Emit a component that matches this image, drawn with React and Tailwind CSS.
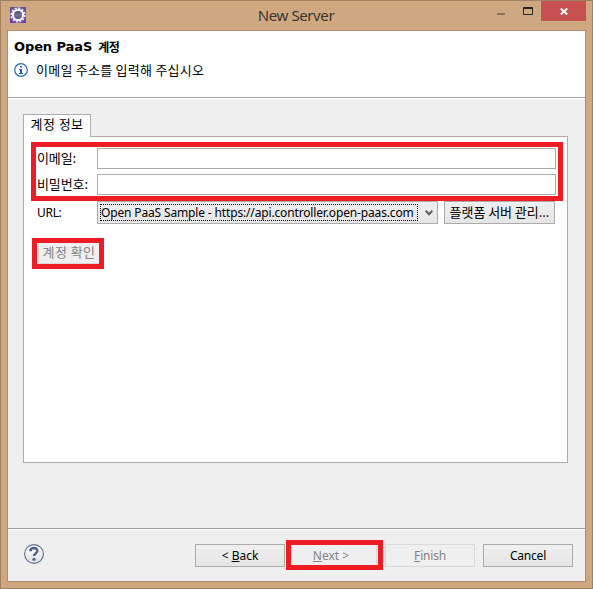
import React from "react";

const ui = "font-['Noto_Sans','Noto_Sans_CJK_KR',sans-serif]";
const ko = "font-['Noto_Sans_CJK_KR',sans-serif] text-[13px]";

function AppIcon() {
  return (
    <svg width="16" height="16" viewBox="0 0 16 16" className="block">
      <defs>
        <linearGradient id="tile" x1="0" y1="0" x2="0" y2="1">
          <stop offset="0" stopColor="#66568c" />
          <stop offset="1" stopColor="#6140ae" />
        </linearGradient>
        <linearGradient id="core" x1="0" y1="0" x2="0" y2="1">
          <stop offset="0" stopColor="#3d3a55" />
          <stop offset="0.5" stopColor="#7a729c" />
          <stop offset="1" stopColor="#4a4068" />
        </linearGradient>
      </defs>
      <rect width="16" height="16" fill="url(#tile)" />
      <circle cx="8" cy="8" r="6.8" fill="none" stroke="#e6e2ec" strokeWidth="1.8" strokeDasharray="2.1 1.46" />
      <circle cx="8" cy="8" r="5.1" fill="url(#core)" stroke="#f4f2f4" strokeWidth="2.2" />
    </svg>
  );
}

function InfoIcon() {
  return (
    <svg width="14" height="14" viewBox="0 0 14 14" className="mt-px block">
      <circle cx="7" cy="7" r="6.3" fill="#fdfeff" stroke="#286aaf" strokeWidth="1.2" />
      <path d="M6 3h2v1.6H6zM5 6h3v4h1v1H5v-1h1V7H5z" fill="#1f64a8" />
    </svg>
  );
}

function HelpIcon() {
  return (
    <svg width="20" height="20" viewBox="0 0 20 20" className="block">
      <defs>
        <linearGradient id="help" x1="0" y1="0" x2="0" y2="1">
          <stop offset="0" stopColor="#ffffff" />
          <stop offset="1" stopColor="#dedede" />
        </linearGradient>
      </defs>
      <circle cx="10" cy="10" r="9.4" fill="url(#help)" stroke="#607190" strokeWidth="1.1" />
      <path d="M6.4 7.2C6.4 3 13.4 3 13.4 6.8c0 2.6-3.4 2.6-3.4 5.2" fill="none" stroke="#4d618a" strokeWidth="2.5" />
      <circle cx="10" cy="15.3" r="1.6" fill="#4d618a" />
    </svg>
  );
}

function Button({ className, disabled, children }) {
  return (
    <button
      className={`flex items-center justify-center leading-[16px] whitespace-nowrap ${
        disabled ? "border-[#d9d9d9] bg-[#efefef] text-[#838383]" : "border-[#acacac] bg-linear-to-b from-[#f0f0f0] to-[#e5e5e5] text-black"
      } ${className}`}
    >
      {children}
    </button>
  );
}

function Field({ label }) {
  return (
    <label className="flex h-[21px] items-center">
      <span className={`-mt-[2px] w-[61px] pl-px leading-[16px] tracking-[-0.1px] ${ko}`}>{label}</span>
      <input className="h-[21px] w-[459px] border border-[#abadb3] bg-white" />
    </label>
  );
}

export default function App() {
  return (
    <div className={`flex h-[589px] w-[593px] flex-col border border-[#a18162] bg-[#cfa881] px-[6px] pb-[6px] text-black ${ui}`}>
      <header className="flex h-[29px] shrink-0 items-start">
        <div className="w-[86px] pt-[6px] pl-[3px]">
          <AppIcon />
        </div>
        <h1 className="w-[406px] pt-[4px] text-center text-[15px] leading-[20px] tracking-[-0.4px] text-[#3a3531]">New Server</h1>
        <svg width="42" height="20" viewBox="0 0 42 20" className="block overflow-visible">
          <path d="M-2 12h8v2h-8z" fill="#877159" />
          <path d="M24 6h10v8H24zM25 8v5h8V8z" fill="#292929" fillRule="evenodd" />
        </svg>
        <div className="-mr-px flex h-5 w-[45px] items-center justify-center bg-[#c75050]">
          <svg width="8" height="7" viewBox="0 0 8 7" className="mt-px">
            <path d="M0.8 0.5 7.2 6.5M7.2 0.5 0.8 6.5" stroke="white" strokeWidth="2" />
          </svg>
        </div>
      </header>

      <main className="flex w-[579px] flex-1 flex-col border border-[#b08d6a] bg-[#efefef]">
        <section className="h-[67px] shrink-0 border-b border-[#a0a0a0] bg-white pt-[7px] pl-[6px]">
          <h2 className="flex h-[18px] items-center leading-[18px] font-bold">
            <span className="font-['DejaVu_Sans','Noto_Sans',sans-serif] text-[13px] font-bold tracking-[-0.1px]">Open PaaS</span>
            <span className="pl-[6px] font-['Noto_Sans_CJK_KR',sans-serif] text-[12px] tracking-[-0.4px]">계정</span>
          </h2>
          <div className="flex h-[27px] items-center gap-[8px]">
            <InfoIcon />
            <p className={`leading-[16px] tracking-[0.25px] ${ko}`}>이메일 주소를 입력해 주십시오</p>
          </div>
        </section>
        <div className="h-px shrink-0 bg-white" />

        <section className="flex h-[429px] shrink-0 flex-col pt-[15px] pl-[15px]">
          <div className={`z-10 -mb-px h-[23px] w-[68px] border border-b-0 border-[#acacac] bg-white text-center leading-[17px] tracking-[0.4px] ${ko}`}>
            계정 정보
          </div>
          <div className="h-[327px] w-[545px] border border-[#acacac] bg-white pt-[5px] pl-[7px]">
            <div className="flex h-[59px] w-[532px] flex-col gap-[5px] border-[5px] border-[#ee1c25] pt-px">
              <Field label="이메일:" />
              <Field label="비밀번호:" />
            </div>
            <div className="flex h-[24px] items-start">
              <span className="w-[66px] pl-[6px] text-xs leading-[24px] tracking-[-0.3px]">URL:</span>
              <div className="flex h-[23px] w-[341px] items-center border border-[#acacac] bg-linear-to-b from-[#f0f0f0] to-[#e5e5e5] pl-[2px]">
                <span className="flex h-[17px] w-[318px] items-center border border-dotted border-black text-xs leading-[15px] tracking-[-0.15px] whitespace-nowrap">
                  Open PaaS Sample - https://api.controller.open-paas.com
                </span>
                <svg width="8" height="6" viewBox="0 0 8 6" className="ml-[7px]">
                  <path d="M0.7 0.8 4 4.2 7.3 0.8" fill="none" stroke="#606060" strokeWidth="2" />
                </svg>
              </div>
              <Button className={`ml-[6px] h-[23px] w-[111px] border pb-[2px] tracking-[-0.05px] ${ko}`}>플랫폼 서버 관리...</Button>
            </div>
            <div className="mt-[13px] ml-px h-[31px] w-[72px] border-[5px] border-[#ee1c25] pl-px">
              <Button disabled className={`h-[21px] w-[61px] border-b border-l pb-[3px] tracking-[0.4px] ${ko}`}>
                계정 확인
              </Button>
            </div>
          </div>
        </section>

        <footer className="flex flex-1 items-start border-t border-[#a0a0a0] shadow-[inset_0_1px_0_white]">
          <div className="w-[187px] pt-[15px] pl-[16px]">
            <HelpIcon />
          </div>
          <Button className="mt-[15px] h-[23px] w-[90px] border text-xs">
            <span>&lt; <u>B</u>ack</span>
          </Button>
          <div className="mt-[11px] ml-px h-[30px] w-[97px] border-[5px] border-[#ee1c25]">
            <Button disabled className="h-5 w-[86px] border-r pt-[2px] pr-[5px] text-xs">
              <span><u>N</u>ext &gt;</span>
            </Button>
          </div>
          <Button disabled className="mt-[15px] ml-[2px] h-[23px] w-[90px] border text-xs tracking-[-0.2px]">
            <span><u>F</u>inish</span>
          </Button>
          <Button className="mt-[15px] ml-[8px] h-[23px] w-[90px] border text-xs tracking-[-0.2px]">Cancel</Button>
        </footer>
      </main>
    </div>
  );
}
